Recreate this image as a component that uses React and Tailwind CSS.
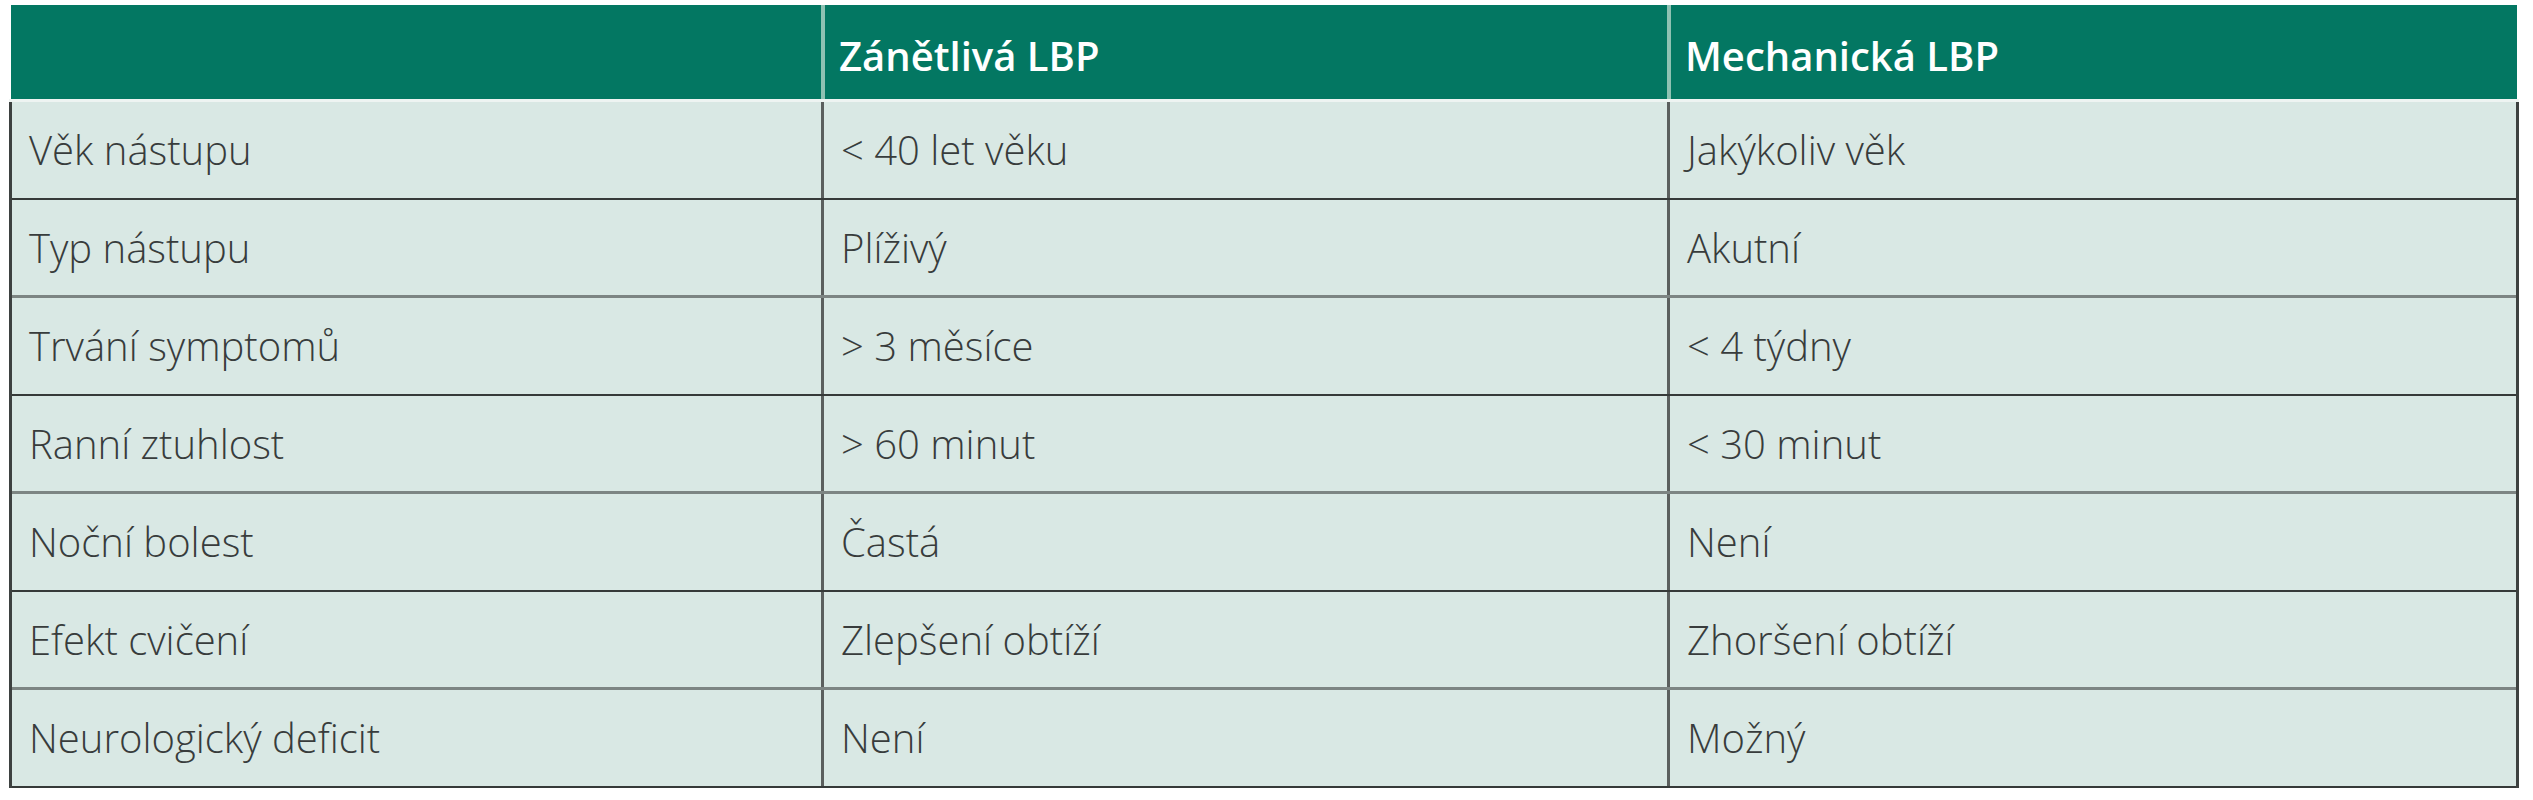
const rows = [
  ["Věk nástupu", "< 40 let věku", "Jakýkoliv věk"],
  ["Typ nástupu", "Plíživý", "Akutní"],
  ["Trvání symptomů", "> 3 měsíce", "< 4 týdny"],
  ["Ranní ztuhlost", "> 60 minut", "< 30 minut"],
  ["Noční bolest", "Častá", "Není"],
  ["Efekt cvičení", "Zlepšení obtíží", "Zhoršení obtíží"],
  ["Neurologický deficit", "Není", "Možný"],
]

const Row = ({ cells, index }) => {
  // lines in the scan alternate between thin dark and thicker grey
  const line =
    index % 2 === 0
      ? "border-b-2 border-[#363a39]"
      : "border-b-[3px] border-[#7d8583]"
  return (
    <div className={`grid grid-cols-[812px_846px_1fr] h-[98px] ${line}`}>
      {cells.map((c, i) => (
        <div
          key={i}
          className={`flex items-center pl-[17px] ${
            i < 2 ? "border-r-[3px] border-[#5b5f5e]" : ""
          }`}
        >
          {c}
        </div>
      ))}
    </div>
  )
}

export default function App() {
  return (
    <div className="min-h-screen bg-white pt-[5px] pl-[9px] font-['Open_Sans',sans-serif]">
      <div className="w-[2510px]">
        <div className="ml-[2px] mr-[2px] grid grid-cols-[814px_846px_1fr] h-[94px] bg-[#037762] text-white text-[40px] font-semibold">
          <div className="border-r-4 border-[#8fc2b3]" />
          <div className="flex items-center pl-[14px] pt-[8px] border-r-4 border-[#8fc2b3]">
            Zánětlivá LBP
          </div>
          <div className="flex items-center pl-[14px] pt-[8px]">Mechanická LBP</div>
        </div>
        <div className="h-[3px] bg-[#eef4f2]" />
        <div className="bg-[#d9e8e4] border-x-[3px] border-[#3d4140] text-[40px] font-light text-[#383c3c]">
          {rows.map((r, i) => (
            <Row key={i} cells={r} index={i} />
          ))}
        </div>
      </div>
    </div>
  )
}
